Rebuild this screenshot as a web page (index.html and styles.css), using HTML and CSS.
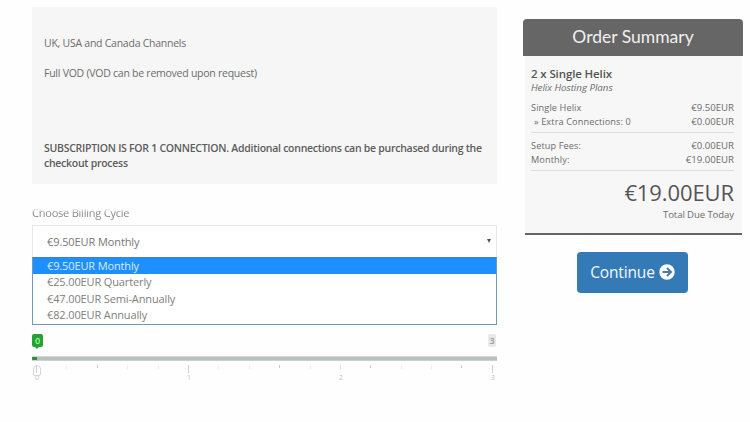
FILE: index.html
```html
<!DOCTYPE html>
<html lang="en">
<head>
<meta charset="utf-8">
<title>Configure order</title>
<link rel="stylesheet" href="styles.css">
</head>
<body>
<div class="page">
  <main class="config">
    <section class="description">
      <p class="channels">UK, USA and Canada Channels</p>
      <p class="vod">Full VOD (VOD can be removed upon request)</p>
      <p class="notice">SUBSCRIPTION IS FOR 1 CONNECTION. Additional connections can be purchased during the<br>checkout process</p>
    </section>
    <div class="cycle-label">Choose Billing Cycle</div>
    <div class="select"><span>€9.50EUR Monthly</span><i class="caret"></i></div>
    <ul class="options">
      <li class="active">€9.50EUR Monthly</li>
      <li>€25.00EUR Quarterly</li>
      <li>€47.00EUR Semi-Annually</li>
      <li>€82.00EUR Annually</li>
    </ul>
    <div class="slider">
      <div class="bubbles"><span class="from">0</span><span class="max">3</span></div>
      <div class="track"><i class="fill"></i></div>
      <div class="ticks">
        <i class="major"></i><i></i><i class="dot"></i><i></i><i></i><i class="major"></i><i></i><i></i><i class="dot"></i><i></i><i class="light"></i><i class="dot"></i><i></i><i></i><i class="dot"></i><i class="major"></i>
      </div>
      <div class="numbers"><span>0</span><span>1</span><span>2</span><span>3</span></div>
      <i class="handle"></i>
    </div>
  </main>
  <aside class="side">
    <section class="summary">
      <h2>Order Summary</h2>
      <div class="summary-body">
        <div class="product">2 x Single Helix</div>
        <div class="group">Helix Hosting Plans</div>
        <div class="row first"><span>Single Helix</span><span class="price">€9.50EUR</span></div>
        <div class="row"><span class="extra">» Extra Connections: 0</span><span class="price">€0.00EUR</span></div>
        <hr>
        <div class="row fees"><span>Setup Fees:</span><span class="price">€0.00EUR</span></div>
        <div class="row"><span>Monthly:</span><span class="price">€19.00EUR</span></div>
        <hr>
        <div class="amount">€19.00EUR</div>
        <div class="due">Total Due Today</div>
      </div>
    </section>
    <button class="continue"><span>Continue</span>
      <svg width="16" height="16" viewBox="0 0 16 16"><circle cx="8" cy="8" r="7.7" fill="#fff"/><path d="M3.5 8h8M8 4l4 4-4 4" fill="none" stroke="#4a7da5" stroke-width="2"/></svg>
    </button>
  </aside>
</div>
</body>
</html>
```

FILE: styles.css
```css
* { box-sizing: border-box; }
body { margin: 0; background: #fefefe; color: #6c6c6c; font-family: "Open Sans", "Noto Sans", sans-serif; font-size: 10.5px; overflow: hidden; }
p, h2, ul { margin: 0; padding: 0; }
.page { display: flex; gap: 26px; width: 750px; height: 422px; padding-left: 32px; }
.config { width: 465px; padding-top: 7px; }
.description { height: 177px; padding: 29px 12px 0; background: #f6f6f6; }
.description p { line-height: 15px; white-space: nowrap; }
.description .channels { letter-spacing: -.25px; }
.description .vod { margin-top: 15px; letter-spacing: -.25px; }
.description .notice { margin-top: 60px; color: #5c5c5c; font-weight: 600; letter-spacing: -.27px; }
.cycle-label { height: 16px; margin: 21px 0 4px; color: #888; font-size: 11px; line-height: 16px; letter-spacing: -.22px; -webkit-mask-image: linear-gradient(transparent 3px, #000 8px); mask-image: linear-gradient(transparent 3px, #000 8px); }
.select { display: flex; align-items: center; justify-content: space-between; height: 32px; padding: 0 5px 1px 14px; border: 1px solid #e8e8e8; border-bottom: 0; background: #fff; color: #777; font-size: 11px; letter-spacing: -.1px; }
.caret { border: 2.5px solid transparent; border-top: 4px solid #555; border-bottom: 0; }
.options { height: 68px; border: 1px solid #6f9ab8; border-top-color: #4380b8; list-style: none; color: #808080; font-size: 11px; letter-spacing: -.13px; background: #fff; }
.options li { height: 16.4px; padding-left: 14px; line-height: 16px; }
.options .active { background: #1e8fff; color: #d9edff; }
.slider { position: relative; padding-top: 9px; }
.bubbles { display: flex; justify-content: space-between; height: 17px; }
.bubbles span { height: 13px; width: 11px; border-radius: 2px; text-align: center; font-size: 9px; line-height: 13px; font-weight: 600; }
.bubbles .from { position: relative; background: #25a233; color: #9cff9c; }
.from::after { content: ""; position: absolute; left: 3px; top: 13px; border: 2.5px solid transparent; border-top-color: #25a233; border-bottom: 0; }
.bubbles .max { width: 8px; margin-right: 1px; background: #e9e9e9; color: #999; }
.track { height: 5px; margin-top: 5px; border-top: 1px solid #d3d7d6; border-bottom: 1px solid #cbd1d0; background: #b9bfbd; }
.fill { display: block; width: 5px; height: 3px; border-radius: 1px; background: #348737; }
.ticks { display: flex; justify-content: space-between; height: 13px; padding: 4px 4px 0 4px; }
.ticks i { width: 1px; height: 4px; background: #eee; }
.ticks .dot { height: 3px; background: #ccc; }
.ticks .major { height: 8px; background: #d0d0d0; }
.ticks .light { height: 5px; background: #e5e5e5; }
.numbers { display: flex; justify-content: space-between; padding: 0 2px 0 3px; color: #c4c4c4; font-size: 7px; line-height: 8px; }
.handle { position: absolute; left: 1px; top: 40px; width: 8px; height: 11px; border: 1px solid #d5d5d5; border-radius: 4px 4px 2px 2px; }
.side { width: 220px; padding-top: 19px; }
.summary { height: 216px; }
.summary h2 { height: 37px; border-radius: 4px 4px 0 0; background: #666; color: #f0f0f0; font: 400 17.5px/36px Lato, sans-serif; text-align: center; }
.summary-body { height: 179px; margin: 0 1px 0 2px; padding: 10px 8px 0 6px; border-bottom: 2px solid #666; background: #f7f7f7; font-size: 9.2px; }
.product { color: #555; font-size: 11.5px; font-weight: 600; line-height: 15px; letter-spacing: -.12px; }
.group { font-size: 9.8px; font-style: italic; line-height: 14px; letter-spacing: -.05px; }
.row { display: flex; justify-content: space-between; height: 14px; line-height: 15px; }
.row span { letter-spacing: .1px; }
.row .price { font-size: 9.6px; letter-spacing: 0; }
.first { margin-top: 5px; }
.extra { padding-left: 3px; }
hr { height: 1px; margin: 4px 0; border: 0; background: #ddd; }
.row.fees { margin-top: 5px; }
.summary-body .amount { margin-top: 6px; color: #555; font-size: 22px; line-height: 30px; text-align: right; letter-spacing: -.1px; }
.due { font-size: 9.6px; line-height: 16px; text-align: right; letter-spacing: -.1px; }
.continue { display: flex; align-items: center; justify-content: center; gap: 4px; width: 111px; height: 41px; margin: 17px 0 0 54px; padding: 0 0 1px; border: 0; border-radius: 4px; background: #337ab7; color: #f4faff; font-family: "Open Sans", sans-serif; font-size: 15.5px; letter-spacing: -.15px; }
```
